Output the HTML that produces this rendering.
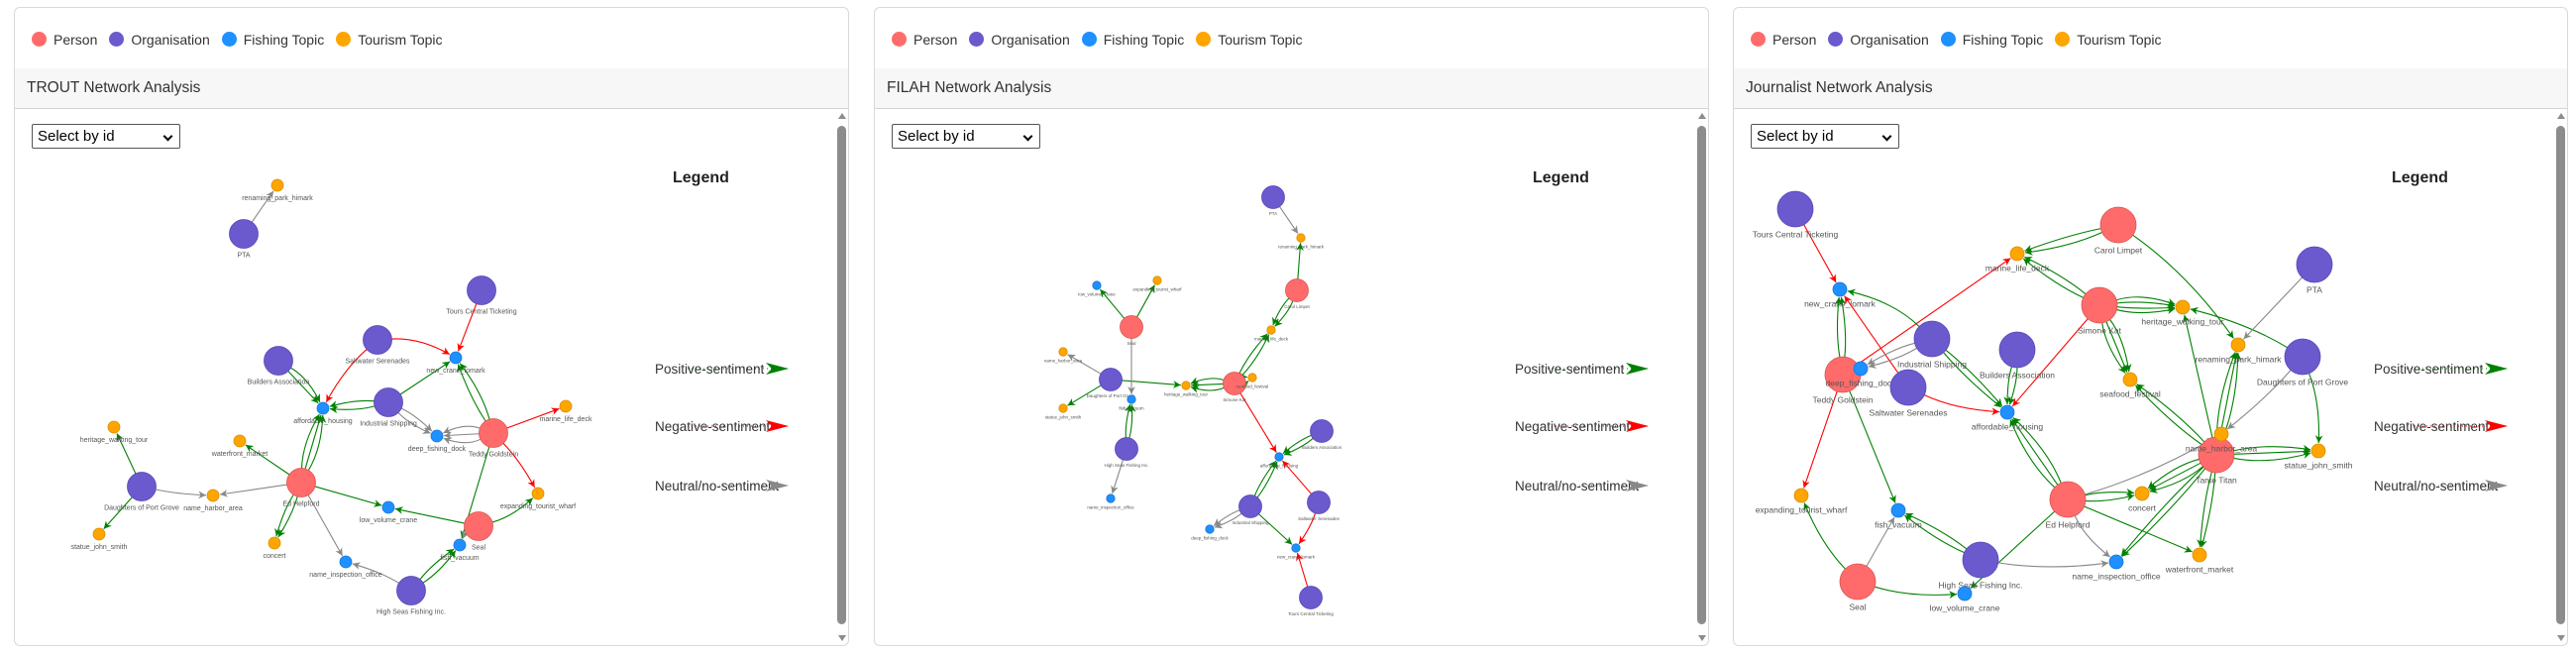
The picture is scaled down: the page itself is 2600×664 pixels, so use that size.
<!DOCTYPE html>
<html><head><meta charset="utf-8">
<style>
html,body{margin:0;padding:0;background:#fff;width:2600px;height:664px;overflow:hidden;font-family:"Liberation Sans",sans-serif;}
.panel{position:absolute;top:7px;width:843px;height:645px;border:1px solid #d9d9d9;border-radius:6px;box-sizing:border-box;background:#fff;overflow:hidden}
.lg{position:absolute;top:24px;font-size:14px;color:#333;white-space:nowrap}
.lg span.d{display:inline-block;width:15px;height:15px;border-radius:50%;vertical-align:-2px;margin-right:7px}
.lg span.t{margin-right:12px}
.tb{position:absolute;left:0;right:0;top:61px;height:40px;background:#f7f7f7;border-bottom:1px solid #d4d4d4;font-size:15.5px;color:#333;line-height:40px;padding-left:12px}
.sel{position:absolute;left:17px;top:117px;width:150px;height:25px;border:1px solid #555;border-radius:2px;font-size:15px;color:#000;line-height:24px;padding-left:5px;box-sizing:border-box}
.sel:after{content:"";position:absolute;right:8px;top:8px;width:5px;height:5px;border-right:2px solid #000;border-bottom:2px solid #000;transform:rotate(45deg)}
.sb{position:absolute;left:830px;top:119px;width:9px;height:503px;background:#8c8c8c;border-radius:5px}
.ua{position:absolute;left:831px;top:106px;width:0;height:0;border-left:4px solid transparent;border-right:4px solid transparent;border-bottom:6px solid #8c8c8c}
.da{position:absolute;left:831px;top:633px;width:0;height:0;border-left:4px solid transparent;border-right:4px solid transparent;border-top:6px solid #8c8c8c}
.leg{position:absolute;left:664px;top:163px;font-size:16px;font-weight:bold;color:#222}
svg#g{position:absolute;left:0;top:0}
</style></head><body>

<div class="panel" style="left:14px">
 <div class="lg" style="left:17px"><span class="d" style="background:#ff6b6b"></span><span class="t">Person</span><span class="d" style="background:#6a5acd"></span><span class="t">Organisation</span><span class="d" style="background:#1e90ff"></span><span class="t">Fishing Topic</span><span class="d" style="background:#ffa500"></span><span class="t">Tourism Topic</span></div>
 <div class="tb">TROUT Network Analysis</div>
 <div class="sel">Select by id</div>
 <div class="ua"></div><div class="sb"></div><div class="da"></div>
 <div class="leg">Legend</div>
</div>
<div class="panel" style="left:882px">
 <div class="lg" style="left:17px"><span class="d" style="background:#ff6b6b"></span><span class="t">Person</span><span class="d" style="background:#6a5acd"></span><span class="t">Organisation</span><span class="d" style="background:#1e90ff"></span><span class="t">Fishing Topic</span><span class="d" style="background:#ffa500"></span><span class="t">Tourism Topic</span></div>
 <div class="tb">FILAH Network Analysis</div>
 <div class="sel">Select by id</div>
 <div class="ua"></div><div class="sb"></div><div class="da"></div>
 <div class="leg">Legend</div>
</div>
<div class="panel" style="left:1749px">
 <div class="lg" style="left:17px"><span class="d" style="background:#ff6b6b"></span><span class="t">Person</span><span class="d" style="background:#6a5acd"></span><span class="t">Organisation</span><span class="d" style="background:#1e90ff"></span><span class="t">Fishing Topic</span><span class="d" style="background:#ffa500"></span><span class="t">Tourism Topic</span></div>
 <div class="tb">Journalist Network Analysis</div>
 <div class="sel">Select by id</div>
 <div class="ua"></div><div class="sb"></div><div class="da"></div>
 <div class="leg">Legend</div>
</div>

<svg id="g" width="2600" height="664" xmlns="http://www.w3.org/2000/svg" font-family="Liberation Sans, sans-serif">
<defs>
<marker id="mg" viewBox="0 0 10 10" refX="10" refY="5" markerWidth="7" markerHeight="7" orient="auto"><path d="M0,0 L10,5 L0,10 L3,5 Z" fill="green"/></marker>
<marker id="mr" viewBox="0 0 10 10" refX="10" refY="5" markerWidth="7" markerHeight="7" orient="auto"><path d="M0,0 L10,5 L0,10 L3,5 Z" fill="red"/></marker>
<marker id="my" viewBox="0 0 10 10" refX="10" refY="5" markerWidth="7" markerHeight="7" orient="auto"><path d="M0,0 L10,5 L0,10 L3,5 Z" fill="#888"/></marker>
</defs>
<g id="edges"></g><g id="nodes"></g><g id="slg"></g>
</svg>

<script>
var C={p:["#ff6b6b","#d9534f"],o:["#6a5acd","#5646b8"],f:["#1e90ff","#1877d6"],t:["#ffa500","#d98c00"]};
var COL={g:["green","mg"],r:["red","mr"],y:["#888","my"]};
var NS="http://www.w3.org/2000/svg";
function el(n,a,p,t){var e=document.createElementNS(NS,n);for(var k in a)e.setAttribute(k,a[k]);if(t)e.textContent=t;p.appendChild(e);return e;}
var E=document.getElementById("edges"),N=document.getElementById("nodes");
function graph(nodes,edges,R,r,fs){
 var m={};
 nodes.forEach(function(n){m[n[0]]=n;});
 edges.forEach(function(e){
  var a=m[e[0]],b=m[e[1]],c=COL[e[2]],off=e[3]||0;
  var ra=(a[1]=="p"||a[1]=="o")?R:r, rb=(b[1]=="p"||b[1]=="o")?R:r;
  var dx=b[2]-a[2],dy=b[3]-a[3],L=Math.sqrt(dx*dx+dy*dy)||1,ux=dx/L,uy=dy/L;
  var mx=(a[2]+b[2])/2-uy*off,my=(a[3]+b[3])/2+ux*off;
  var ex=b[2]-mx,ey=b[3]-my,el2=Math.sqrt(ex*ex+ey*ey)||1;
  var x2=b[2]-ex/el2*(rb+1),y2=b[3]-ey/el2*(rb+1);
  var sx=mx-a[2],sy=my-a[3],sl=Math.sqrt(sx*sx+sy*sy)||1;
  var x1=a[2]+sx/sl*ra,y1=a[3]+sy/sl*ra;
  el("path",{d:"M"+x1+","+y1+" Q"+mx+","+my+" "+x2+","+y2,fill:"none",stroke:c[0],"stroke-width":1.1,"marker-end":"url(#"+c[1]+")"},E);
 });
 nodes.forEach(function(n){
  var rr=(n[1]=="p"||n[1]=="o")?R:r;
  el("circle",{cx:n[2],cy:n[3],r:rr,fill:C[n[1]][0],stroke:C[n[1]][1],"stroke-width":0.8},N);
  el("text",{x:n[2],y:n[3]+rr+fs+2,"font-size":fs,fill:"#555","text-anchor":"middle"},N,n[0]);
 });
}
graph([
["renaming_park_himark","t",280,187],["PTA","o",246,236],["Tours Central Ticketing","o",486,293],
["Saltwater Serenades","o",381,343],["new_crane_lomark","f",460,361],["Builders Association","o",281,364],
["affordable_housing","f",326,412],["Industrial Shipping","o",392,406],["marine_life_deck","t",571,410],
["deep_fishing_dock","f",441,440],["Teddy Goldstein","p",498,437],["heritage_walking_tour","t",115,431],
["waterfront_market","t",242,445],["Ed Helpford","p",304,487],["Daughters of Port Grove","o",143,491],
["name_harbor_area","t",215,500],["expanding_tourist_wharf","t",543,498],["low_volume_crane","f",392,512],
["Seal","p",483,531],["statue_john_smith","t",100,539],["concert","t",277,548],["fish_vacuum","f",464,550],
["name_inspection_office","f",349,567],["High Seas Fishing Inc.","o",415,596]
],[
["PTA","renaming_park_himark","y"],["Tours Central Ticketing","new_crane_lomark","r"],
["Saltwater Serenades","new_crane_lomark","r",-12],["Saltwater Serenades","affordable_housing","r",8],
["Builders Association","affordable_housing","g",0],["Builders Association","affordable_housing","g",-10],
["Industrial Shipping","affordable_housing","g",6],["Industrial Shipping","affordable_housing","g",-6],
["Industrial Shipping","new_crane_lomark","g"],["Industrial Shipping","deep_fishing_dock","y",-5],["Industrial Shipping","deep_fishing_dock","y",6],
["Teddy Goldstein","deep_fishing_dock","y",-12],["Teddy Goldstein","deep_fishing_dock","y",0],["Teddy Goldstein","deep_fishing_dock","y",12],
["Teddy Goldstein","new_crane_lomark","g",-5],["Teddy Goldstein","new_crane_lomark","g",8],
["Teddy Goldstein","marine_life_deck","r"],["Teddy Goldstein","expanding_tourist_wharf","r",-5],["Teddy Goldstein","fish_vacuum","g"],
["Ed Helpford","affordable_housing","g",-10],["Ed Helpford","affordable_housing","g",0],["Ed Helpford","affordable_housing","g",10],
["Ed Helpford","waterfront_market","g"],["Ed Helpford","name_harbor_area","y"],["Daughters of Port Grove","name_harbor_area","y",3],
["Daughters of Port Grove","heritage_walking_tour","g"],["Daughters of Port Grove","statue_john_smith","g"],
["Ed Helpford","concert","g",-5],["Ed Helpford","concert","g",5],["Ed Helpford","low_volume_crane","g"],
["Ed Helpford","name_inspection_office","y"],["Seal","low_volume_crane","g"],["Seal","expanding_tourist_wharf","g",8],
["Seal","fish_vacuum","y",5],["High Seas Fishing Inc.","fish_vacuum","g",-5],["High Seas Fishing Inc.","fish_vacuum","g",6],
["High Seas Fishing Inc.","name_inspection_office","y",5]
],14.5,6,7);
graph([
["PTA","o",1285,199],["renaming_park_himark","t",1313,240],["Carol Limpet","p",1309,293],["marine_life_deck","t",1283,333],
["Simone Kat","p",1246,387],["seafood_festival","t",1264,381],["heritage_walking_tour","t",1197,389],["Seal","p",1142,330],
["low_volume_crane","f",1107,288],["expanding_tourist_wharf","t",1168,283],["name_harbor_area","t",1073,355],
["Daughters of Port Grove","o",1121,383],["statue_john_smith","t",1073,412],["fish_vacuum","f",1142,403],
["High Seas Fishing Inc.","o",1137,453],["name_inspection_office","f",1121,503],["Builders Association","o",1334,435],
["affordable_housing","f",1291,461],["Industrial Shipping","o",1262,511],["Saltwater Serenades","o",1331,507],
["deep_fishing_dock","f",1221,534],["new_crane_lomark","f",1308,553],["Tours Central Ticketing","o",1323,603]
],[
["PTA","renaming_park_himark","y"],["Carol Limpet","renaming_park_himark","g"],["Carol Limpet","marine_life_deck","g",-5],["Carol Limpet","marine_life_deck","g",5],
["Simone Kat","marine_life_deck","g",-5],["Simone Kat","marine_life_deck","g",5],["Simone Kat","seafood_festival","g",-4],["Simone Kat","seafood_festival","g",4],
["Simone Kat","heritage_walking_tour","g",-9],["Simone Kat","heritage_walking_tour","g",0],["Simone Kat","heritage_walking_tour","g",9],
["Daughters of Port Grove","heritage_walking_tour","g"],["Daughters of Port Grove","name_harbor_area","y"],["Daughters of Port Grove","statue_john_smith","g"],
["Seal","low_volume_crane","g"],["Seal","expanding_tourist_wharf","g"],["Seal","fish_vacuum","y"],
["High Seas Fishing Inc.","fish_vacuum","g",-4],["High Seas Fishing Inc.","fish_vacuum","g",4],["High Seas Fishing Inc.","name_inspection_office","y"],
["Simone Kat","affordable_housing","r"],["Builders Association","affordable_housing","g",-4],["Builders Association","affordable_housing","g",4],
["Industrial Shipping","affordable_housing","g",-4],["Industrial Shipping","affordable_housing","g",4],["Saltwater Serenades","affordable_housing","r"],
["Industrial Shipping","deep_fishing_dock","y",-4],["Industrial Shipping","deep_fishing_dock","y",4],["Industrial Shipping","new_crane_lomark","g"],
["Saltwater Serenades","new_crane_lomark","r",-4],["Tours Central Ticketing","new_crane_lomark","r"]
],11.5,4.2,4.5);
graph([
["Tours Central Ticketing","o",1812,211],["new_crane_lomark","f",1857,292],["Carol Limpet","p",2138,227],["marine_life_deck","t",2036,256],
["Simone Kat","p",2119,308],["heritage_walking_tour","t",2203,310],["PTA","o",2336,267],["renaming_park_himark","t",2259,348],
["Industrial Shipping","o",1950,342],["Teddy Goldstein","p",1860,378],["deep_fishing_dock","f",1878,372],["Saltwater Serenades","o",1926,391],
["Builders Association","o",2036,353],["affordable_housing","f",2026,416],["seafood_festival","t",2150,383],["Daughters of Port Grove","o",2324,360],
["Tante Titan","p",2237,459],["name_harbor_area","t",2242,438],["statue_john_smith","t",2340,455],["expanding_tourist_wharf","t",1818,500],
["fish_vacuum","f",1916,515],["Ed Helpford","p",2087,504],["concert","t",2162,498],["High Seas Fishing Inc.","o",1999,565],
["name_inspection_office","f",2136,567],["waterfront_market","t",2220,560],["Seal","p",1875,587],["low_volume_crane","f",1983,599]
],[
["Tours Central Ticketing","new_crane_lomark","r"],["Industrial Shipping","new_crane_lomark","g",15],["Teddy Goldstein","new_crane_lomark","g",-6],["Teddy Goldstein","new_crane_lomark","g",6],
["Saltwater Serenades","new_crane_lomark","r"],["Teddy Goldstein","marine_life_deck","r"],["Industrial Shipping","deep_fishing_dock","y",-6],["Industrial Shipping","deep_fishing_dock","y",6],
["Saltwater Serenades","affordable_housing","r",10],["Industrial Shipping","affordable_housing","g",-5],["Industrial Shipping","affordable_housing","g",5],
["Builders Association","affordable_housing","g",-5],["Builders Association","affordable_housing","g",5],["Simone Kat","affordable_housing","r"],
["Ed Helpford","affordable_housing","g",-12],["Ed Helpford","affordable_housing","g",0],["Ed Helpford","affordable_housing","g",12],
["Carol Limpet","marine_life_deck","g",-8],["Carol Limpet","marine_life_deck","g",4],["Simone Kat","marine_life_deck","g",-6],["Simone Kat","marine_life_deck","g",6],
["Carol Limpet","renaming_park_himark","g",-15],["Simone Kat","heritage_walking_tour","g",-14],["Simone Kat","heritage_walking_tour","g",-6],["Simone Kat","heritage_walking_tour","g",3],["Simone Kat","heritage_walking_tour","g",10],
["Simone Kat","seafood_festival","g",-10],["Simone Kat","seafood_festival","g",0],["Simone Kat","seafood_festival","g",10],
["Tante Titan","seafood_festival","g",-6],["Tante Titan","seafood_festival","g",6],["Tante Titan","heritage_walking_tour","g"],
["Daughters of Port Grove","heritage_walking_tour","g",10],["PTA","renaming_park_himark","y"],
["Tante Titan","renaming_park_himark","g",-10],["Tante Titan","renaming_park_himark","g",0],["Tante Titan","renaming_park_himark","g",10],
["Daughters of Port Grove","name_harbor_area","y",-5],["Daughters of Port Grove","statue_john_smith","g",-10],
["Tante Titan","statue_john_smith","g",-10],["Tante Titan","statue_john_smith","g",0],["Tante Titan","statue_john_smith","g",12],
["Tante Titan","concert","g",-10],["Tante Titan","concert","g",0],["Tante Titan","concert","g",10],
["Ed Helpford","concert","g",-6],["Ed Helpford","concert","g",6],["Ed Helpford","name_harbor_area","y",10],
["Tante Titan","name_inspection_office","g",-5],["Tante Titan","name_inspection_office","g",5],
["Tante Titan","waterfront_market","g",-5],["Tante Titan","waterfront_market","g",5],["Ed Helpford","waterfront_market","g"],
["Ed Helpford","name_inspection_office","y",10],["Ed Helpford","low_volume_crane","g"],["Teddy Goldstein","fish_vacuum","g"],
["Teddy Goldstein","expanding_tourist_wharf","r"],["Seal","expanding_tourist_wharf","g",-10],["Seal","fish_vacuum","y"],
["Seal","low_volume_crane","g",10],["High Seas Fishing Inc.","fish_vacuum","g",-6],["High Seas Fishing Inc.","fish_vacuum","g",6],
["High Seas Fishing Inc.","name_inspection_office","y",10]
],18,7,8.5);
var S=document.getElementById("slg");
[14,882,1749].forEach(function(o){
 [["Positive-sentiment",372,"g"],["Negative-sentiment",430,"r"],["Neutral/no-sentiment",490,"y"]].forEach(function(s){
  var c=COL[s[2]];
  el("line",{x1:o+680,y1:s[1],x2:o+783,y2:s[1],stroke:c[0],"stroke-width":1,"stroke-dasharray":"1,3"},S);
  el("text",{x:o+647,y:s[1]+5,"font-size":13.5,fill:"#333"},S,s[0]);
  el("path",{d:"M"+(o+759)+","+(s[1]-6)+" L"+(o+782)+","+s[1]+" L"+(o+759)+","+(s[1]+6)+" L"+(o+765)+","+s[1]+" Z",fill:c[0]},S);
 });
});
</script>
</body></html>
